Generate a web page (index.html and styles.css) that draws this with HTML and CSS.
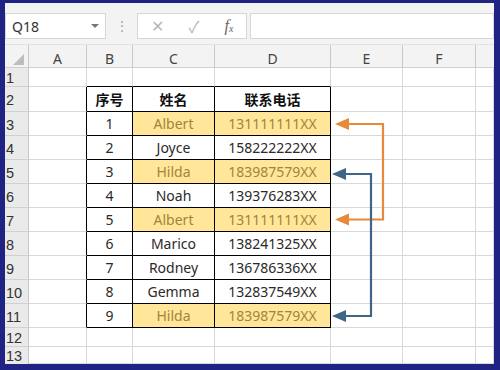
FILE: index.html
```html
<!DOCTYPE html>
<html>
<head>
<meta charset="utf-8">
<link rel="stylesheet" href="styles.css">
</head>
<body>
<div class="frame">
  <div class="app">
    <div class="toolbar">
      <div class="namebox"><span>Q18</span><span class="dd"></span></div>
      <div class="sep">⋮</div>
      <div class="fbtns"><span class="x">✕</span><span class="ok">✓</span><span class="fx">f<sub>x</sub></span></div>
      <div class="finput"></div>
    </div>
    <div class="sheet">
      <div class="ch corner"><span class="tri"></span></div>
      <div class="ch">A</div><div class="ch">B</div><div class="ch">C</div><div class="ch">D</div><div class="ch">E</div><div class="ch">F</div><div class="ch last"></div>

      <div class="rh">1</div><div class="c"></div><div class="c bb"></div><div class="c bb"></div><div class="c bb"></div><div class="c"></div><div class="c"></div><div class="c"></div>

      <div class="rh">2</div><div class="c lb"></div><div class="c t th">序号</div><div class="c t th">姓名</div><div class="c t th">联系电话</div><div class="c"></div><div class="c"></div><div class="c"></div>

      <div class="rh">3</div><div class="c lb"></div><div class="c t">1</div><div class="c t dup">Albert</div><div class="c t dup">131111111XX</div><div class="c"></div><div class="c"></div><div class="c"></div>

      <div class="rh">4</div><div class="c lb"></div><div class="c t">2</div><div class="c t">Joyce</div><div class="c t">158222222XX</div><div class="c"></div><div class="c"></div><div class="c"></div>

      <div class="rh">5</div><div class="c lb"></div><div class="c t">3</div><div class="c t dup">Hilda</div><div class="c t dup">183987579XX</div><div class="c"></div><div class="c"></div><div class="c"></div>

      <div class="rh">6</div><div class="c lb"></div><div class="c t">4</div><div class="c t">Noah</div><div class="c t">139376283XX</div><div class="c"></div><div class="c"></div><div class="c"></div>

      <div class="rh">7</div><div class="c lb"></div><div class="c t">5</div><div class="c t dup">Albert</div><div class="c t dup">131111111XX</div><div class="c"></div><div class="c"></div><div class="c"></div>

      <div class="rh">8</div><div class="c lb"></div><div class="c t">6</div><div class="c t">Marico</div><div class="c t">138241325XX</div><div class="c"></div><div class="c"></div><div class="c"></div>

      <div class="rh">9</div><div class="c lb"></div><div class="c t">7</div><div class="c t">Rodney</div><div class="c t">136786336XX</div><div class="c"></div><div class="c"></div><div class="c"></div>

      <div class="rh">10</div><div class="c lb"></div><div class="c t">8</div><div class="c t">Gemma</div><div class="c t">132837549XX</div><div class="c"></div><div class="c"></div><div class="c"></div>

      <div class="rh">11</div><div class="c lb"></div><div class="c t">9</div><div class="c t dup">Hilda</div><div class="c t dup">183987579XX</div><div class="c"></div><div class="c"></div><div class="c"></div>

      <div class="rh">12</div><div class="c"></div><div class="c"></div><div class="c"></div><div class="c"></div><div class="c"></div><div class="c"></div><div class="c"></div>

      <div class="rh last-row">13</div><div class="c"></div><div class="c"></div><div class="c"></div><div class="c"></div><div class="c"></div><div class="c"></div><div class="c"></div>
    </div>
  </div>
  <svg class="arrows" width="500" height="370" viewBox="0 0 500 370">
    <path d="M347 124 H383 V219.5 H347" fill="none" stroke="#e8883a" stroke-width="2.2"/>
    <polygon points="335,124 349,118 349,130" fill="#e8883a"/>
    <polygon points="335,219.5 349,213.5 349,225.5" fill="#e8883a"/>
    <path d="M345 174 H371 V316 H345" fill="none" stroke="#416589" stroke-width="2.2"/>
    <polygon points="332,174 346,168 346,180" fill="#416589"/>
    <polygon points="332,316 346,310 346,322" fill="#416589"/>
  </svg>
</div>
</body>
</html>
```

FILE: styles.css
```css
* { box-sizing: border-box; }
html, body { margin: 0; padding: 0; }
body {
  width: 500px;
  height: 370px;
  background: #1f2383;
  font-family: "Noto Sans", "Noto Sans CJK SC", sans-serif;
  overflow: hidden;
}
.frame {
  position: relative;
  width: 500px;
  height: 370px;
  padding: 3px 6px 6px 5px;
}
.app {
  width: 489px;
  height: 361px;
  background: #fff;
  overflow: hidden;
  display: flex;
  flex-direction: column;
}
.toolbar {
  height: 42px;
  flex: none;
  background: #f3f3f3;
  display: flex;
  align-items: flex-start;
  padding-top: 10px;
  border-bottom: 1px solid #e2e2e2;
}
.namebox {
  width: 101px;
  height: 26px;
  background: #fff;
  border: 1px solid #d6d6d6;
  display: flex;
  align-items: center;
  justify-content: space-between;
  padding: 0 6px 0 6px;
  font-size: 14px;
  color: #333;
}
.dd {
  width: 0;
  height: 0;
  border-left: 4px solid transparent;
  border-right: 4px solid transparent;
  border-top: 4px solid #777;
}
.sep {
  width: 31px;
  text-align: center;
  color: #aaa;
  font-size: 14px;
  line-height: 26px;
}
.fbtns {
  width: 110px;
  height: 26px;
  background: #fff;
  border: 1px solid #d6d6d6;
  display: flex;
  align-items: center;
  justify-content: space-around;
  color: #b8b8b8;
  font-size: 16px;
}
.fbtns .fx {
  font-family: "Liberation Serif", serif;
  font-style: italic;
  color: #666;
  font-size: 16px;
}
.fbtns .fx sub { font-size: 10px; vertical-align: -1px; }
.finput {
  flex: 1;
  height: 26px;
  margin-left: 3px;
  background: #fff;
  border: 1px solid #d6d6d6;
}
.sheet {
  flex: 1;
  display: grid;
  grid-template-columns: 24px 58px 46px 82px 116px 72px 73px 1fr;
  grid-template-rows: 23px 19px 25px repeat(9, 24px) 19px 17px;
}
.ch {
  background: #f3f3f3;
  border-right: 1px solid #c8c8c8;
  border-bottom: 1px solid #d0d0d0;
  font-size: 14px;
  color: #444;
  display: flex;
  align-items: center;
  justify-content: center;
  padding-top: 5px;
}
.ch.last { border-right: none; }
.corner {
  align-items: flex-end;
  justify-content: flex-end;
  padding: 0 4px 2px 0;
}
.tri {
  width: 0;
  height: 0;
  border-left: 11px solid transparent;
  border-bottom: 11px solid #bdbdbd;
}
.rh {
  background: #eaeaea;
  border-right: 1px solid #c8c8c8;
  border-bottom: 1px solid #d0d0d0;
  font-family: "Liberation Sans", sans-serif;
  font-size: 14.5px;
  line-height: 14px;
  color: #333;
  display: flex;
  align-items: center;
  padding-left: 1px;
  padding-top: 2px;
}
.rh.last-row { padding-top: 0; border-bottom: none; }
.c {
  border-right: 1px solid #d8d8d8;
  border-bottom: 1px solid #d8d8d8;
  display: flex;
  align-items: center;
  justify-content: center;
  font-size: 14px;
  color: #2a2a2a;
  white-space: nowrap;
}
.c.lb { border-right-color: #000; }
.c.bb { border-bottom-color: #000; }
.c.t {
  border-right-color: #000;
  border-bottom-color: #000;
}
.c.th {
  font-family: "Noto Sans CJK SC", sans-serif;
  font-weight: 700;
  font-size: 14px;
  color: #111;
}
.c.dup {
  background: #ffe699;
  color: #a2843c;
}
.arrows {
  position: absolute;
  left: 0;
  top: 0;
  pointer-events: none;
}
```
